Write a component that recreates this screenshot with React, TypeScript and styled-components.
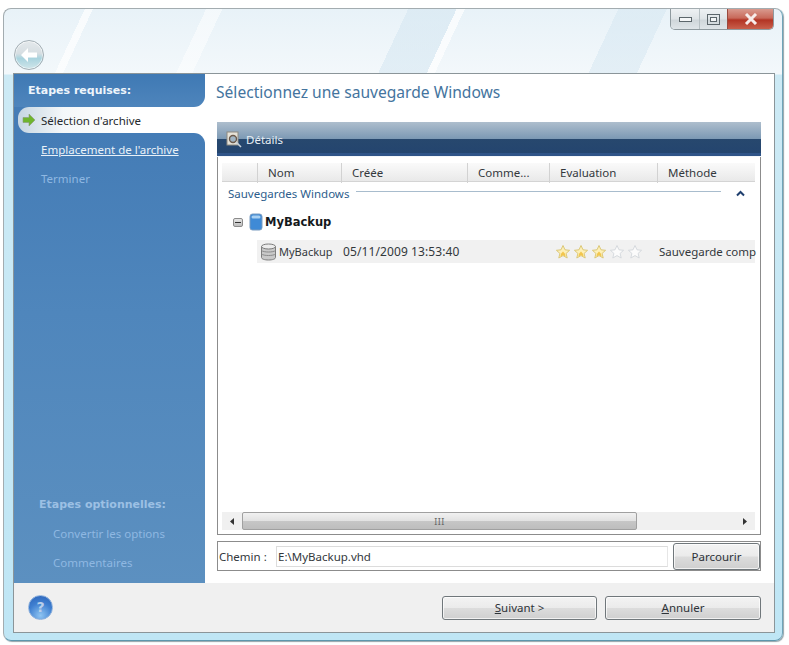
import React from 'react';
import styled, { createGlobalStyle } from 'styled-components';

const GlobalStyle = createGlobalStyle`
  html, body {
    margin: 0;
    background: #fff;
  }
  body {
    font-family: 'Noto Sans', 'DejaVu Sans', sans-serif;
    font-size: 11.5px;
    color: #33383c;
  }
  * {
    box-sizing: border-box;
  }
`;

const Page = styled.div`
  width: 789px;
  height: 645px;
  padding: 8px 6px 4px 3px;
  overflow: hidden;
`;

const Window = styled.div`
  width: 780px;
  height: 633px;
  display: flex;
  flex-direction: column;
  padding: 0 7px 7px 9px;
  border: 1px solid #a3acb0;
  border-right-color: #6fa4b8;
  border-bottom-color: #5d97ad;
  border-radius: 8px;
  box-shadow: 1px 1px 1px rgba(60, 90, 100, 0.55);
  background:
    linear-gradient(115deg, transparent 0 10%, rgba(255,255,255,.7) 10% 11%, transparent 11% 25%, rgba(255,255,255,.5) 25% 27%, transparent 27% 50%, rgba(212,230,241,.55) 50% 56%, rgba(255,255,255,.7) 56% 57%, transparent 57% 76%, rgba(212,230,241,.5) 76% 82%, transparent 82%) no-repeat 0 0 / 100% 65px,
    linear-gradient(180deg, #e8f2f8 0, #f3f8fb 65px, #cdeaf5 66px, #bfe6f5 100%);
`;

const TitleBar = styled.div`
  height: 64px;
  flex: none;
  display: flex;
  justify-content: space-between;
  align-items: flex-start;
  margin-left: 1px;
  margin-right: 1px;
`;

const BackButton = styled.div`
  width: 30px;
  height: 30px;
  margin-top: 31px;
  border-radius: 50%;
  border: 1px solid #a2aeb4;
  background: linear-gradient(180deg, #e4e9ec 0, #d6dee2 45%, #a9d3de 62%, #d0e6ea 100%);
  box-shadow: inset 0 0 0 1px rgba(255,255,255,.6);
  display: flex;
  align-items: center;
  justify-content: center;
`;

const Caption = styled.div`
  display: flex;
  height: 21px;
  border: 1px solid #8f9a9f;
  border-top: none;
  border-radius: 0 0 5px 5px;
  overflow: hidden;
`;

const CaptionButton = styled.div<{ $w: number; $close?: boolean }>`
  width: ${p => p.$w}px;
  display: flex;
  align-items: center;
  justify-content: center;
  border-left: 1px solid ${p => (p.$close ? '#9a4a3e' : '#b7c0c4')};
  background: ${p =>
    p.$close
      ? 'linear-gradient(180deg, #d99a8e 0, #c8695a 45%, #b23424 55%, #c9604c 100%)'
      : 'linear-gradient(180deg, #eef1f3 0, #dfe4e7 50%, #cfd6da 55%, #dfe5e8 100%)'};
  &:first-child {
    border-left: none;
  }
`;

const Body = styled.div`
  flex: 1;
  min-height: 0;
  display: flex;
  flex-direction: column;
  border: 1px solid #8b9599;
  background: #f0f0f0;
`;

const Content = styled.div`
  flex: 1;
  min-height: 0;
  display: flex;
  background: #fff;
`;

const Sidebar = styled.div`
  width: 191px;
  flex: none;
  display: flex;
  flex-direction: column;
  background: #fff;
`;

const SideTop = styled.div`
  display: flex;
  flex-direction: column;
  background: linear-gradient(180deg, #3f79b4 0, #4e85bc 100%);
  border-bottom-right-radius: 11px;
`;

const SideRest = styled.div`
  flex: 1;
  display: flex;
  flex-direction: column;
  padding: 2px 0 6px;
  border-top-right-radius: 11px;
  background: linear-gradient(180deg, #447cb6 0, #4f86bc 40%, #5c90c0 100%);
`;

const SideHeading = styled.div<{ $dim?: boolean; $pad: number; $h: number }>`
  height: ${p => p.$h}px;
  line-height: ${p => p.$h}px;
  padding-left: ${p => p.$pad}px;
  font-family: 'DejaVu Sans', sans-serif;
  font-weight: 700;
  font-size: 11px;
  color: ${p => (p.$dim ? '#9cc0e4' : '#eef5fb')};
`;

const SelectedRow = styled.div`
  display: flex;
  padding-left: 4px;
  background: linear-gradient(90deg, #447cb6 0 15px, transparent 15px);
`;

const SelectedStep = styled.div`
  flex: 1;
  height: 26px;
  display: flex;
  align-items: center;
  gap: 5px;
  padding-left: 4px;
  border-radius: 11px 0 0 11px;
  background: linear-gradient(90deg, #c6d6e2 0, #f4f7f9 45px, #fff 110px);
  color: #25292d;
`;

const StepLink = styled.div<{ $underline?: boolean; $dim?: boolean; $pad: number }>`
  height: 29px;
  line-height: 29px;
  padding-left: ${p => p.$pad}px;
  color: ${p => (p.$dim ? '#8fb8e2' : '#e9f1f8')};
  text-decoration: ${p => (p.$underline ? 'underline' : 'none')};
  white-space: nowrap;
`;

const Main = styled.div`
  flex: 1;
  min-width: 0;
  display: flex;
  flex-direction: column;
  padding: 0 13px 12px 12px;
`;

const Title = styled.h1`
  margin: 0 0 0 -1px;
  height: 48px;
  line-height: 36px;
  font-size: 15.6px;
  font-weight: 400;
  color: #44749e;
  white-space: nowrap;
`;

const DetailsBar = styled.div`
  height: 35px;
  flex: none;
  display: flex;
  align-items: center;
  gap: 3px;
  padding: 0 0 0 8px;
  color: #e8eef4;
  background: linear-gradient(180deg, #aebecd 0, #7c99b4 48%, #27486e 49%, #24456f 88%, #2f5488 90%, #2f5488 96%, #e6eef5 97%, #fff 100%);
`;

const DetailsBox = styled.div`
  flex: 1;
  min-height: 0;
  display: flex;
  flex-direction: column;
  border: 1px solid #8c8c8c;
  border-top: none;
  padding: 6px 5px 4px 4px;
  background: #fff;
`;

const ColumnHeader = styled.div`
  flex: none;
  display: grid;
  grid-template-columns: 35px 84px 126px 82px 108px 98px;
  height: 19px;
  background: linear-gradient(180deg, #fafafa 0, #f1f1f1 55%, #e9e9e9 100%);
  border-bottom: 1px solid #d4d4d4;
`;

const HeaderCell = styled.div`
  padding-left: 10px;
  line-height: 20px;
  border-left: 1px solid #d2d2d2;
  white-space: nowrap;
  &:first-child {
    border-left: none;
  }
`;

const GroupRow = styled.div`
  flex: none;
  height: 22px;
  display: flex;
  align-items: center;
  padding: 0 10px 0 6px;
  color: #2d5d8c;
  gap: 7px;
`;

const GroupLine = styled.div`
  flex: 1;
  height: 1px;
  margin-top: -3px;
  background: #a8bccd;
`;

const Chevron = styled.svg`
  margin-left: 8px;
`;

const TreeRow = styled.div`
  flex: none;
  height: 36px;
  display: flex;
  align-items: center;
  padding-left: 11px;
  font-family: 'DejaVu Sans', sans-serif;
  font-weight: 700;
  font-size: 11.5px;
  color: #15191c;
`;

const Expander = styled.div`
  width: 10px;
  height: 9px;
  margin-right: 5px;
  border: 1px solid #8b8b8b;
  border-radius: 2px;
  background: linear-gradient(180deg, #e6e6e6, #bdbdbd);
  display: flex;
  align-items: center;
  justify-content: center;
  &::after {
    content: '';
    width: 6px;
    height: 1px;
    background: #333;
  }
`;

const TreeIcon = styled.svg`
  margin-right: 1px;
`;

const ItemRow = styled.div`
  flex: none;
  display: grid;
  grid-template-columns: 86px 126px 82px 104px 100px;
  height: 23px;
  margin-left: 35px;
  align-items: center;
  background: #f1f1f1;
  white-space: nowrap;
`;

const ItemName = styled.div`
  display: flex;
  align-items: center;
  gap: 2px;
  padding-left: 3px;
  font-size: 11px;
`;

const DateCell = styled.div`
  font-size: 12px;
  letter-spacing: 0.1px;
`;

const Stars = styled.div`
  display: flex;
  gap: 2px;
  padding-left: 4px;
`;

const MethodCell = styled.div`
  padding-left: 4px;
`;

const Filler = styled.div`
  flex: 1;
`;

const ScrollBar = styled.div`
  flex: none;
  height: 18px;
  display: flex;
  align-items: stretch;
  background: #f0f0f0;
`;

const ScrollArrow = styled.div`
  width: 20px;
  display: flex;
  align-items: center;
  justify-content: center;
`;

const ScrollThumb = styled.div`
  width: 395px;
  border: 1px solid #a0a0a0;
  border-radius: 2px;
  background: linear-gradient(180deg, #f1f1f1 0, #e2e2e2 48%, #c6c6c6 52%, #bdbdbd 100%);
  display: flex;
  align-items: center;
  justify-content: center;
  color: #666;
  font-size: 9px;
  letter-spacing: 0.5px;
`;

const Track = styled.div`
  flex: 1;
`;

const PathBar = styled.div`
  flex: none;
  margin-top: 6px;
  height: 30px;
  display: flex;
  align-items: center;
  border: 1px solid #8c8c8c;
  padding: 0 0 0 1px;
  background: #fff;
`;

const PathLabel = styled.span`
  width: 57px;
  flex: none;
  white-space: nowrap;
`;

const PathInput = styled.div`
  width: 392px;
  height: 21px;
  line-height: 20px;
  padding-left: 1px;
  border: 1px solid #dcdcdc;
  border-right-color: #e6e6e6;
  background: #fff;
`;

const Button = styled.div<{ $w: number; $h: number }>`
  width: ${p => p.$w}px;
  height: ${p => p.$h}px;
  display: flex;
  align-items: center;
  justify-content: center;
  border: 1px solid #70777b;
  border-radius: 3px;
  box-shadow: inset 0 0 0 1px rgba(255, 255, 255, 0.7);
  background: linear-gradient(180deg, #f3f3f3 0, #ebebeb 48%, #dcdcdc 52%, #cfcfcf 100%);
  color: #2e3338;
  white-space: nowrap;
  span {
    text-decoration: underline;
  }
`;

const PathButton = styled(Button)`
  margin-left: 5px;
`;

const Footer = styled.div`
  height: 49px;
  flex: none;
  display: flex;
  align-items: center;
  gap: 8px;
  padding: 0 13px 0 14px;
  background: #f0f0f0;
`;

const HelpIcon = styled.div`
  width: 25px;
  height: 25px;
  margin-right: auto;
  border-radius: 50%;
  border: 1px solid #8fb2dd;
  background: radial-gradient(circle at 50% 85%, #8ec4f2 0, #3f7fd0 55%, #2b62b8 100%);
  color: #b9cfea;
  font-family: 'DejaVu Sans', sans-serif;
  font-weight: 700;
  font-size: 14px;
  line-height: 23px;
  text-align: center;
`;

const Star: React.FC<{ on?: boolean }> = ({ on }) => (
  <svg width="16" height="16" viewBox="0 0 16 16">
    <polygon
      points="8,1.5 10,5.8 14.6,6.3 11.1,9.4 12.2,14 8,11.6 3.8,14 4.9,9.4 1.4,6.3 6,5.8"
      fill={on ? '#fdf0b8' : '#fbfbfb'}
      stroke={on ? '#dcc878' : '#d6dade'}
      strokeWidth="1"
      strokeLinejoin="round"
    />
    {on && <polygon points="8,7.5 10,9.7 10.6,12.5 8,11.2 5.4,12.5 6,9.7" fill="#f2c64e" />}
  </svg>
);

const App: React.FC = () => (
  <Page>
    <GlobalStyle />
    <Window>
      <TitleBar>
        <BackButton>
          <svg width="20" height="16" viewBox="0 0 20 16">
            <path d="M9 1 L2 8 L9 15 L9 10.5 L18 10.5 L18 5.5 L9 5.5 Z" fill="#fff" />
          </svg>
        </BackButton>
        <Caption>
          <CaptionButton $w={28}>
            <svg width="13" height="8" viewBox="0 0 13 8">
              <rect x="0.5" y="2.5" width="12" height="4" fill="#f4f6f7" stroke="#5c666b" />
            </svg>
          </CaptionButton>
          <CaptionButton $w={28}>
            <svg width="13" height="11" viewBox="0 0 13 11">
              <rect x="0.5" y="0.5" width="12" height="10" fill="none" stroke="#5c666b" />
              <rect x="3.5" y="3.5" width="6" height="4" fill="#f4f6f7" stroke="#5c666b" />
            </svg>
          </CaptionButton>
          <CaptionButton $w={46} $close>
            <svg width="14" height="12" viewBox="0 0 14 12">
              <path d="M2 1 L12 11 M12 1 L2 11" stroke="#f7ecea" strokeWidth="3" />
            </svg>
          </CaptionButton>
        </Caption>
      </TitleBar>
      <Body>
        <Content>
          <Sidebar>
            <SideTop>
              <SideHeading $pad={14} $h={33}>Etapes requises:</SideHeading>
            </SideTop>
            <SelectedRow>
              <SelectedStep>
                <svg width="14" height="14" viewBox="0 0 14 14">
                  <path d="M7 1 L13 7 L7 13 L7 9.5 L1 9.5 L1 4.5 L7 4.5 Z" fill="#6fb52e" stroke="#8a9a7a" strokeWidth="0.6" />
                </svg>
                Sélection d'archive
              </SelectedStep>
            </SelectedRow>
            <SideRest>
              <StepLink $pad={27} $underline>Emplacement de l'archive</StepLink>
              <StepLink $pad={27} $dim>Terminer</StepLink>
              <Filler />
              <SideHeading $pad={25} $h={29} $dim>Etapes optionnelles:</SideHeading>
              <StepLink $pad={39} $dim>Convertir les options</StepLink>
              <StepLink $pad={39} $dim>Commentaires</StepLink>
            </SideRest>
          </Sidebar>
          <Main>
            <Title>Sélectionnez une sauvegarde Windows</Title>
            <DetailsBar>
              <svg width="18" height="18" viewBox="0 0 18 18">
                <rect x="2" y="1" width="11" height="13" fill="#e6e2d8" stroke="#8d8a80" />
                <circle cx="8" cy="8" r="3.5" fill="#9fb4c4" stroke="#6b5a4c" strokeWidth="1.4" />
                <path d="M11 11 L16 16" stroke="#c8d2da" strokeWidth="1.6" />
              </svg>
              Détails
            </DetailsBar>
            <DetailsBox>
              <ColumnHeader>
                <HeaderCell />
                <HeaderCell>Nom</HeaderCell>
                <HeaderCell>Créée</HeaderCell>
                <HeaderCell>Comme...</HeaderCell>
                <HeaderCell>Evaluation</HeaderCell>
                <HeaderCell>Méthode</HeaderCell>
              </ColumnHeader>
              <GroupRow>
                Sauvegardes Windows
                <GroupLine />
                <Chevron width="9" height="7" viewBox="0 0 9 7">
                  <path d="M1 5.5 L4.5 2 L8 5.5" fill="none" stroke="#1f3f6e" strokeWidth="2" />
                </Chevron>
              </GroupRow>
              <TreeRow>
                <Expander />
                <TreeIcon width="16" height="18" viewBox="0 0 16 18">
                  <rect x="2" y="1" width="12" height="16" rx="2.5" fill="#3f8ad6" stroke="#7a9cc0" />
                  <rect x="3.5" y="2.5" width="9" height="3" rx="1.5" fill="#a8d0f2" />
                </TreeIcon>
                MyBackup
              </TreeRow>
              <ItemRow>
                <ItemName>
                  <svg width="17" height="18" viewBox="0 0 17 18">
                    <path d="M1.5 3.5 V14.5 C1.5 16 4.5 17 8.5 17 C12.5 17 15.5 16 15.5 14.5 V3.5 Z" fill="#c9c9c9" stroke="#7c7c7c" />
                    <ellipse cx="8.5" cy="3.5" rx="7" ry="2.5" fill="#ececec" stroke="#7c7c7c" />
                    <path d="M1.5 7.5 C3.5 9.5 13.5 9.5 15.5 7.5 M1.5 11 C3.5 13 13.5 13 15.5 11" fill="none" stroke="#8b8b8b" />
                  </svg>
                  MyBackup
                </ItemName>
                <DateCell>05/11/2009 13:53:40</DateCell>
                <span />
                <Stars>
                  <Star on />
                  <Star on />
                  <Star on />
                  <Star />
                  <Star />
                </Stars>
                <MethodCell>Sauvegarde comp</MethodCell>
              </ItemRow>
              <Filler />
              <ScrollBar>
                <ScrollArrow>
                  <svg width="4" height="7" viewBox="0 0 4 7"><path d="M4 0 L0 3.5 L4 7 Z" fill="#333" /></svg>
                </ScrollArrow>
                <ScrollThumb>III</ScrollThumb>
                <Track />
                <ScrollArrow>
                  <svg width="4" height="7" viewBox="0 0 4 7"><path d="M0 0 L4 3.5 L0 7 Z" fill="#333" /></svg>
                </ScrollArrow>
              </ScrollBar>
            </DetailsBox>
            <PathBar>
              <PathLabel>Chemin :</PathLabel>
              <PathInput>E:\MyBackup.vhd</PathInput>
              <PathButton $w={87} $h={27}>Parcourir</PathButton>
            </PathBar>
          </Main>
        </Content>
        <Footer>
          <HelpIcon>?</HelpIcon>
          <Button $w={155} $h={24}><span>S</span>uivant &gt;</Button>
          <Button $w={156} $h={24}><span>A</span>nnuler</Button>
        </Footer>
      </Body>
    </Window>
  </Page>
);

export default App;
